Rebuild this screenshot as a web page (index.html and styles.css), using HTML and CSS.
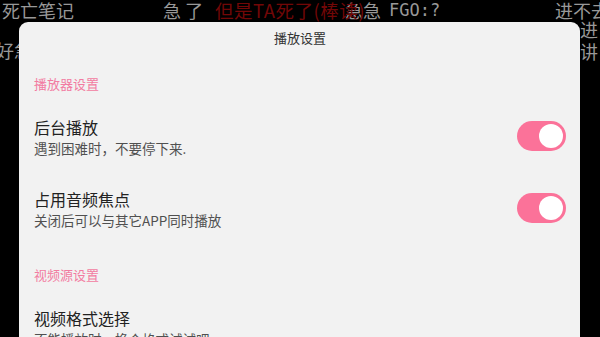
FILE: index.html
```html
<!DOCTYPE html>
<html lang="zh-CN">
<head>
<meta charset="utf-8">
<title>播放设置</title>
<link rel="stylesheet" href="styles.css">
</head>
<body>
<div class="danmaku-layer">
  <span class="dm gray" style="left:2px;top:0px">死亡笔记</span>
  <span class="dm gray" style="left:163px;top:0px">急 了</span>
  <span class="dm gray" style="left:345px;top:0px">急急</span>
  <span class="dm gray mono" style="left:389px;top:0px">FGO:?</span>
  <span class="dm red" style="left:215px;top:0px">但是TA死了(棒读)</span>
  <span class="dm gray" style="left:555px;top:0px">进不去</span>
  <span class="dm gray" style="left:-4px;top:40px">好急</span>
  <span class="dm gray" style="left:580px;top:19px">进</span>
  <span class="dm gray" style="left:580px;top:41px">讲</span>
</div>

<div class="sheet">
  <div class="sheet-title">播放设置</div>

  <div class="section-header">播放器设置</div>
  <div class="item">
    <div class="item-text">
      <div class="item-title">后台播放</div>
      <div class="item-sub">遇到困难时，不要停下来.</div>
    </div>
    <div class="toggle on"><div class="knob"></div></div>
  </div>
  <div class="item">
    <div class="item-text">
      <div class="item-title">占用音频焦点</div>
      <div class="item-sub">关闭后可以与其它APP同时播放</div>
    </div>
    <div class="toggle on"><div class="knob"></div></div>
  </div>

  <div class="section-header">视频源设置</div>
  <div class="item">
    <div class="item-text">
      <div class="item-title">视频格式选择</div>
      <div class="item-sub">不能播放时，换个格式试试吧</div>
    </div>
  </div>
</div>
</body>
</html>
```

FILE: styles.css
```css
html, body {
  margin: 0;
  padding: 0;
}
body {
  width: 600px;
  height: 337px;
  overflow: hidden;
  background: #000;
  position: relative;
  font-family: "Noto Sans CJK SC", "Noto Sans", sans-serif;
}
.danmaku-layer {
  position: absolute;
  left: 0;
  top: 0;
  width: 600px;
  height: 337px;
  z-index: 0;
}
.dm {
  position: absolute;
  font-size: 18px;
  line-height: 20px;
  white-space: nowrap;
}
.dm.gray { color: #989898; }
.dm.red { color: #720707; font-size: 18.5px; letter-spacing: 0.5px; }
.dm.mono { font-family: "DejaVu Sans Mono", monospace; font-size: 17px; }

.sheet {
  position: relative;
  z-index: 1;
  margin: 22px 0 0 19px;
  width: 561px;
  height: 315px;
  background: #f2f2f2;
  border-radius: 9px 9px 0 0;
  padding: 0 14px 0 15px;
  box-sizing: border-box;
  overflow: hidden;
}
.sheet-title {
  height: 32px;
  line-height: 32px;
  text-align: center;
  font-size: 13px;
  color: #333;
}
.section-header {
  margin-top: 20px;
  margin-bottom: 7px;
  line-height: 20px;
  font-size: 13px;
  color: #f27ba1;
}
.item {
  display: flex;
  align-items: center;
  justify-content: space-between;
  padding: 15px 0;
}
.item-title {
  font-size: 16px;
  line-height: 22px;
  color: #222;
}
.item-sub {
  font-size: 13.5px;
  line-height: 20px;
  color: #505050;
}
.toggle {
  width: 49px;
  height: 30px;
  border-radius: 15px;
  background: #fb7299;
  display: flex;
  align-items: center;
  justify-content: flex-end;
  padding-right: 3px;
  box-sizing: border-box;
  margin-top: -2px;
}
.knob {
  width: 24px;
  height: 24px;
  border-radius: 50%;
  background: #fff;
}
```
